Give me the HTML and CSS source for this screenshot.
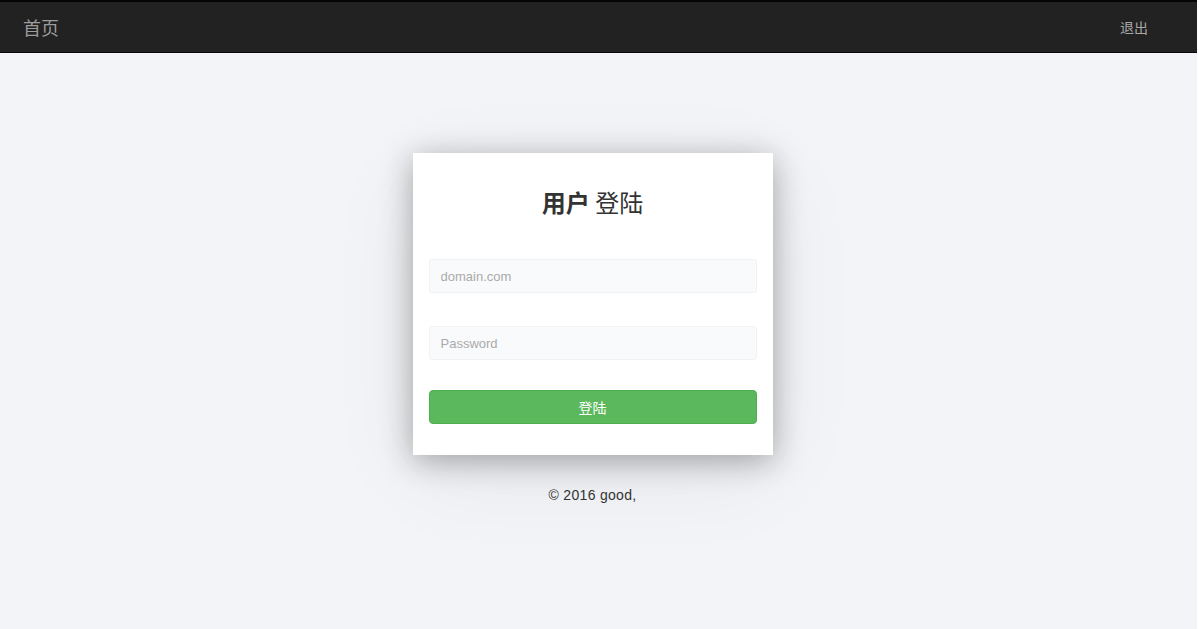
FILE: index.html
```html
<!DOCTYPE html>
<html lang="zh">
<head>
<meta charset="utf-8">
<title>用户登陆</title>
<link rel="stylesheet" href="styles.css">
</head>
<body>
<header class="navbar">
  <a class="brand" href="#">首页</a>
  <a class="logout" href="#">退出</a>
</header>
<main class="page">
  <form class="card">
    <h2 class="title"><strong>用户</strong> 登陆</h2>
    <input class="field" type="text" placeholder="domain.com">
    <input class="field field-second" type="password" placeholder="Password">
    <button class="btn" type="button">登陆</button>
  </form>
  <p class="footer">© 2016 good,</p>
</main>
</body>
</html>
```

FILE: styles.css
```css
html, body {
  margin: 0;
  padding: 0;
  height: 100%;
}
body {
  background: #f3f4f7;
  font-family: "Liberation Sans", "Noto Sans CJK SC", sans-serif;
  color: #333;
  border-right: 2px solid #ffffff;
  box-sizing: border-box;
}
.navbar {
  height: 50px;
  background: #222222;
  border-top: 2px solid #050505;
  border-bottom: 1px solid #080808;
  display: flex;
  align-items: center;
  justify-content: space-between;
  padding: 0 49px 0 23px;
}
.brand {
  color: #9d9d9d;
  font-size: 18px;
  text-decoration: none;
  font-family: "Noto Sans CJK SC", sans-serif;
}
.logout {
  color: #a8a8a8;
  font-size: 14px;
  text-decoration: none;
  font-family: "Noto Sans CJK SC", sans-serif;
}
.page {
  display: flex;
  flex-direction: column;
  align-items: center;
  padding: 100px 12px 0 0;
}
.card {
  width: 360px;
  box-sizing: border-box;
  background: #ffffff;
  padding: 36px 16px 31px;
  display: flex;
  flex-direction: column;
  box-shadow: 0 6px 30px rgba(0, 0, 0, 0.32), 0 20px 90px rgba(0, 0, 0, 0.06);
}
.title {
  margin: 0 0 44px;
  text-align: center;
  font-size: 24px;
  line-height: 26px;
  font-weight: normal;
  color: #333;
  font-family: "Noto Sans CJK SC", sans-serif;
}
.title strong {
  font-weight: bold;
}
.field {
  height: 34px;
  box-sizing: border-box;
  border: 1px solid #f1f2f4;
  border-radius: 3px;
  background: #f9fafb;
  padding: 0 11px;
  font-size: 13px;
  font-family: "Liberation Sans", sans-serif;
  color: #555;
  outline: none;
}
.field::placeholder {
  color: #aaaaaa;
}
.field-second {
  margin-top: 33px;
}
.btn {
  margin-top: 30px;
  height: 34px;
  border: 1px solid #4cae4c;
  border-radius: 4px;
  background: #5cb85c;
  color: #ffffff;
  font-size: 14px;
  font-family: "Noto Sans CJK SC", sans-serif;
  cursor: pointer;
}
.footer {
  margin: 31px 0 0;
  font-size: 14px;
  line-height: 18px;
  color: #333;
  letter-spacing: 0.3px;
}
```
